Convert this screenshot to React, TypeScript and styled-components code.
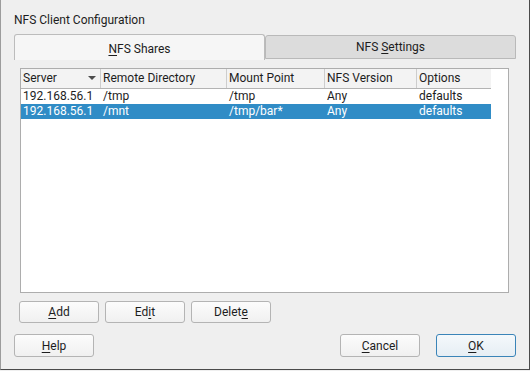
import styled, { createGlobalStyle } from "styled-components";

const GlobalStyle = createGlobalStyle`
  html, body {
    margin: 0;
    padding: 0;
    background: #efefef;
  }
  body {
    font-family: Roboto, "Noto Sans", "Liberation Sans", sans-serif;
    font-size: 12px;
    color: #1d1d1d;
  }
`;

const Dialog = styled.div`
  box-sizing: border-box;
  width: 530px;
  height: 370px;
  background: #efefef;
  border-left: 1px solid #9c9c9c;
  border-right: 1px solid #4a4a4a;
  border-bottom: 1px solid #4a4a4a;
  padding: 12px 13px 12px 13px;
  display: flex;
  flex-direction: column;
`;

const Title = styled.div`
  height: 16px;
  line-height: 16px;
  font-size: 12px;
  margin-bottom: 6px;
`;

const TabBar = styled.div`
  display: flex;
  align-items: flex-end;
  height: 26px;
`;

const Tab = styled.div<{ $active?: boolean }>`
  box-sizing: border-box;
  width: 251px;
  height: ${(p) => (p.$active ? "26px" : "24px")};
  margin-bottom: ${(p) => (p.$active ? "0" : "1px")};
  display: flex;
  align-items: center;
  justify-content: center;
  background: ${(p) => (p.$active ? "#f6f6f6" : "#dcdcdc")};
  border: 1px solid ${(p) => (p.$active ? "#bcbcbc" : "#b9b9b9")};
  border-bottom: ${(p) => (p.$active ? "none" : "1px solid #b9b9b9")};
  border-radius: 3px 3px 0 0;
  padding-top: ${(p) => (p.$active ? "2px" : "0")};
`;

const Mn = styled.span`
  text-decoration: underline;
  text-underline-offset: 2px;
`;

const Pane = styled.div`
  padding: 8px 7px 0 6px;
  display: flex;
  flex-direction: column;
`;

const Table = styled.div`
  box-sizing: border-box;
  height: 225px;
  background: #ffffff;
  border: 1px solid #adadad;
`;

const Grid = styled.div`
  display: grid;
  grid-template-columns: 80px 126px 98px 92px 74px;
  width: 470px;
`;

const HeaderRow = styled(Grid)`
  height: 19px;
  background: #f3f3f3;
  border-bottom: 1px solid #b3b3b3;
`;

const HeaderCell = styled.div<{ $last?: boolean }>`
  position: relative;
  padding-left: 2px;
  line-height: 19px;
  border-right: ${(p) => (p.$last ? "none" : "1px solid #cdcdcd")};
  white-space: nowrap;
`;

const SortArrow = styled.span`
  position: absolute;
  right: 4px;
  top: 7px;
  width: 0;
  height: 0;
  border-left: 4px solid transparent;
  border-right: 4px solid transparent;
  border-top: 4px solid #4d4d4d;
`;

const Row = styled(Grid)<{ $selected?: boolean }>`
  height: 15px;
  line-height: 15px;
  background: ${(p) => (p.$selected ? "#308cc6" : "transparent")};
  color: ${(p) => (p.$selected ? "#ffffff" : "#1d1d1d")};
`;

const Cell = styled.div`
  padding-left: 2px;
  white-space: nowrap;
  overflow: hidden;
`;

const ButtonRow = styled.div`
  display: flex;
  gap: 6px;
  margin-top: 8px;
  margin-left: -1px;
`;

const Footer = styled.div`
  display: flex;
  margin-top: 11px;
  gap: 16px;
`;

const Spacer = styled.div`
  flex: 1;
`;

const Button = styled.button<{ $default?: boolean; $h?: number }>`
  box-sizing: border-box;
  width: 80px;
  height: ${(p) => p.$h ?? 22}px;
  padding: 0;
  font-family: inherit;
  font-size: 12px;
  color: #1d1d1d;
  background: linear-gradient(#fcfcfc, #f0f0f0);
  border: 1px solid ${(p) => (p.$default ? "#3a84b8" : "#b4b4b4")};
  border-radius: 3px;
  ${(p) => (p.$default ? "background: linear-gradient(#f4f8fb, #e6eef4);" : "")}
`;

const shares = [
  { server: "192.168.56.1", dir: "/tmp", mount: "/tmp", ver: "Any", opts: "defaults" },
  { server: "192.168.56.1", dir: "/mnt", mount: "/tmp/bar*", ver: "Any", opts: "defaults" },
];

export default function App() {
  return (
    <>
      <GlobalStyle />
      <Dialog>
        <Title>NFS Client Configuration</Title>
        <TabBar>
          <Tab $active>
            <span>
              <Mn>N</Mn>FS Shares
            </span>
          </Tab>
          <Tab>
            <span>
              NFS <Mn>S</Mn>ettings
            </span>
          </Tab>
        </TabBar>
        <Pane>
          <Table>
            <HeaderRow>
              <HeaderCell>
                Server
                <SortArrow />
              </HeaderCell>
              <HeaderCell>Remote Directory</HeaderCell>
              <HeaderCell>Mount Point</HeaderCell>
              <HeaderCell>NFS Version</HeaderCell>
              <HeaderCell $last>Options</HeaderCell>
            </HeaderRow>
            {shares.map((s, i) => (
              <Row key={i} $selected={i === 1}>
                <Cell>{s.server}</Cell>
                <Cell>{s.dir}</Cell>
                <Cell>{s.mount}</Cell>
                <Cell>{s.ver}</Cell>
                <Cell>{s.opts}</Cell>
              </Row>
            ))}
          </Table>
          <ButtonRow>
            <Button>
              <Mn>A</Mn>dd
            </Button>
            <Button>
              Ed<Mn>i</Mn>t
            </Button>
            <Button>
              Delet<Mn>e</Mn>
            </Button>
          </ButtonRow>
        </Pane>
        <Footer>
          <Button $h={23}>
            <Mn>H</Mn>elp
          </Button>
          <Spacer />
          <Button $h={23}>
            <Mn>C</Mn>ancel
          </Button>
          <Button $h={23} $default>
            <Mn>O</Mn>K
          </Button>
        </Footer>
      </Dialog>
    </>
  );
}
